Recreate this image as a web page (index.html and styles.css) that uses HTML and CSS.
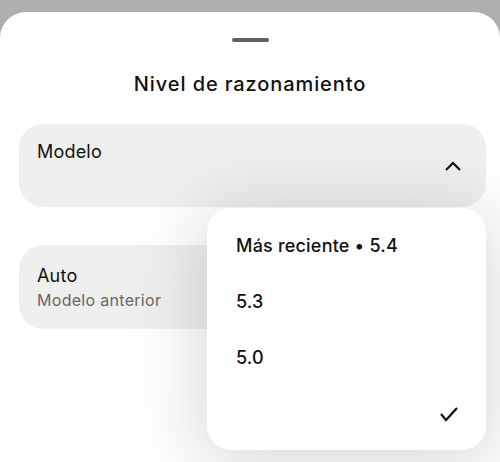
FILE: index.html
```html
<!DOCTYPE html>
<html lang="es">
<head>
    <meta charset="UTF-8">
    <meta name="viewport" content="width=device-width, initial-scale=1.0">
    <title>Nivel de razonamiento</title>
    <link rel="stylesheet" href="styles.css">
</head>
<body>
    <div class="sheet">
        <div class="handle"></div>
        <div class="title">Nivel de razonamiento</div>

        <div class="card model-card">
            <div class="card-label">Modelo</div>
            <svg class="chevron" width="18" height="12" viewBox="0 0 18 12">
                <path d="M2 10 L9 3 L16 10" fill="none" stroke="#111" stroke-width="2.2"/>
            </svg>
        </div>

        <div class="card auto-card">
            <div class="card-label">Auto</div>
            <div class="card-sub">Modelo anterior</div>
        </div>

        <div class="menu">
            <div class="menu-item">Más reciente • 5.4</div>
            <div class="menu-item">5.3</div>
            <div class="menu-item">5.0</div>
            <div class="menu-item check-row">
                <svg width="20" height="16" viewBox="0 0 20 16">
                    <path d="M2 8 L7 14 L18 2" fill="none" stroke="#111" stroke-width="2.2"/>
                </svg>
            </div>
        </div>
    </div>
</body>
</html>
```

FILE: styles.css
```css
body {
    font-family: Inter, "Open Sans", sans-serif;
    background-color: #afafaf;
    color: #111;
    margin: 0;
    padding: 0;
    overflow: hidden;
}

.sheet {
    position: relative;
    margin-top: 12px;
    height: 450px;
    background-color: #fff;
    border-radius: 26px 26px 0 0;
    padding-top: 26px;
    box-sizing: border-box;
}

.handle {
    width: 37px;
    height: 4px;
    border-radius: 2px;
    background-color: #5f5f5f;
    margin: 0 auto;
}

.title {
    text-align: center;
    font-size: 20px;
    font-weight: 500;
    letter-spacing: 0.9px;
    margin-top: 28px;
    line-height: 28px;
}

.card {
    background-color: #efefef;
    border-radius: 24px;
    margin: 0 14px 0 19px;
    padding: 15px 18px;
    box-sizing: border-box;
}

.model-card {
    margin-top: 26px;
    height: 83px;
    display: flex;
    justify-content: space-between;
    align-items: flex-start;
}

.chevron {
    margin-top: 21px;
    margin-right: 6px;
}

.auto-card {
    margin-top: 38px;
    height: 84px;
    padding-top: 18px;
}

.card-label {
    font-size: 18px;
    letter-spacing: 0.2px;
    line-height: 26px;
}

.card-sub {
    font-size: 16px;
    color: #666;
    letter-spacing: 0.3px;
    line-height: 22px;
}

.menu {
    position: absolute;
    left: 207px;
    top: 196px;
    width: 279px;
    height: 242px;
    background-color: #fff;
    border-radius: 24px;
    box-shadow: 0 10px 70px 10px rgba(0, 0, 0, 0.14);
    padding-top: 10px;
    box-sizing: border-box;
}

.menu-item {
    font-size: 18px;
    font-weight: 500;
    letter-spacing: 0.2px;
    line-height: 56px;
    padding-left: 29px;
}

.check-row {
    display: flex;
    justify-content: flex-end;
    align-items: center;
    height: 56px;
    padding-right: 27px;
}
```
